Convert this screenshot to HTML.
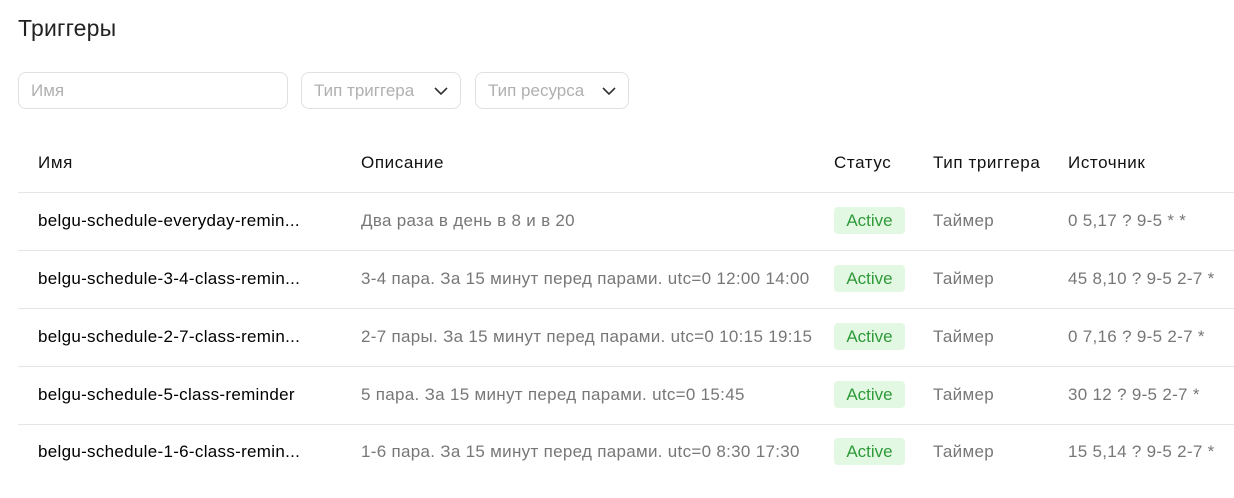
<!DOCTYPE html>
<html><head><meta charset="utf-8"><style>
body{margin:0;background:#fff;font-family:"Liberation Sans",sans-serif;width:1234px;height:498px;overflow:hidden;position:relative;color:#000}
.t{position:absolute;left:18px;top:15px;font-size:23px;color:#222;letter-spacing:0.2px}
.in{position:absolute;top:72px;height:37px;border:1px solid #e0e0e0;border-radius:8px;box-sizing:border-box;font-size:17px;color:#b0b0b0;line-height:35px;padding-left:12px}
.in svg{position:absolute;right:12px;top:13px}
.hl{position:absolute;left:18px;right:0;height:1px;background:#e5e5e5}
.c{position:absolute;font-size:17px;white-space:nowrap;letter-spacing:0.3px}
.h{color:#111;top:153px;letter-spacing:0.6px}
.g{color:#777}
.b{position:absolute;left:834px;width:71px;height:27px;background:#e3f8e2;border-radius:4px;color:#2f9a3a;font-size:17px;text-align:center;line-height:27px}
</style></head><body>
<div class="t">Триггеры</div>
<div class="in" style="left:18px;width:270px">Имя</div>
<div class="in" style="left:301px;width:160px">Тип триггера<svg width="14" height="10" viewBox="0 0 14 10"><path d="M1 2l6 6 6-6" fill="none" stroke="#333" stroke-width="1.6"/></svg></div>
<div class="in" style="left:475px;width:154px">Тип ресурса<svg width="14" height="10" viewBox="0 0 14 10"><path d="M1 2l6 6 6-6" fill="none" stroke="#333" stroke-width="1.6"/></svg></div>
<div class="c h" style="left:38px">Имя</div>
<div class="c h" style="left:361px">Описание</div>
<div class="c h" style="left:834px">Статус</div>
<div class="c h" style="left:933px">Тип триггера</div>
<div class="c h" style="left:1068px">Источник</div>
<div class="hl" style="top:192px"></div>
<div class="hl" style="top:250px"></div>
<div class="hl" style="top:308px"></div>
<div class="hl" style="top:366px"></div>
<div class="hl" style="top:424px"></div>

<div class="c" style="left:38px;top:211px">belgu-schedule-everyday-remin...</div>
<div class="c g" style="left:361px;top:211px">Два раза в день в 8 и в 20</div>
<div class="b" style="top:207px">Active</div>
<div class="c g" style="left:933px;top:211px">Таймер</div>
<div class="c g" style="left:1068px;top:211px">0 5,17 ? 9-5 * *</div>

<div class="c" style="left:38px;top:269px">belgu-schedule-3-4-class-remin...</div>
<div class="c g" style="left:361px;top:269px">3-4 пара. За 15 минут перед парами. utc=0 12:00 14:00</div>
<div class="b" style="top:265px">Active</div>
<div class="c g" style="left:933px;top:269px">Таймер</div>
<div class="c g" style="left:1068px;top:269px">45 8,10 ? 9-5 2-7 *</div>

<div class="c" style="left:38px;top:327px">belgu-schedule-2-7-class-remin...</div>
<div class="c g" style="left:361px;top:327px">2-7 пары. За 15 минут перед парами. utc=0 10:15 19:15</div>
<div class="b" style="top:323px">Active</div>
<div class="c g" style="left:933px;top:327px">Таймер</div>
<div class="c g" style="left:1068px;top:327px">0 7,16 ? 9-5 2-7 *</div>

<div class="c" style="left:38px;top:385px">belgu-schedule-5-class-reminder</div>
<div class="c g" style="left:361px;top:385px">5 пара. За 15 минут перед парами. utc=0 15:45</div>
<div class="b" style="top:381px">Active</div>
<div class="c g" style="left:933px;top:385px">Таймер</div>
<div class="c g" style="left:1068px;top:385px">30 12 ? 9-5 2-7 *</div>

<div class="c" style="left:38px;top:442px">belgu-schedule-1-6-class-remin...</div>
<div class="c g" style="left:361px;top:442px">1-6 пара. За 15 минут перед парами. utc=0 8:30 17:30</div>
<div class="b" style="top:438px">Active</div>
<div class="c g" style="left:933px;top:442px">Таймер</div>
<div class="c g" style="left:1068px;top:442px">15 5,14 ? 9-5 2-7 *</div>
</body></html>
